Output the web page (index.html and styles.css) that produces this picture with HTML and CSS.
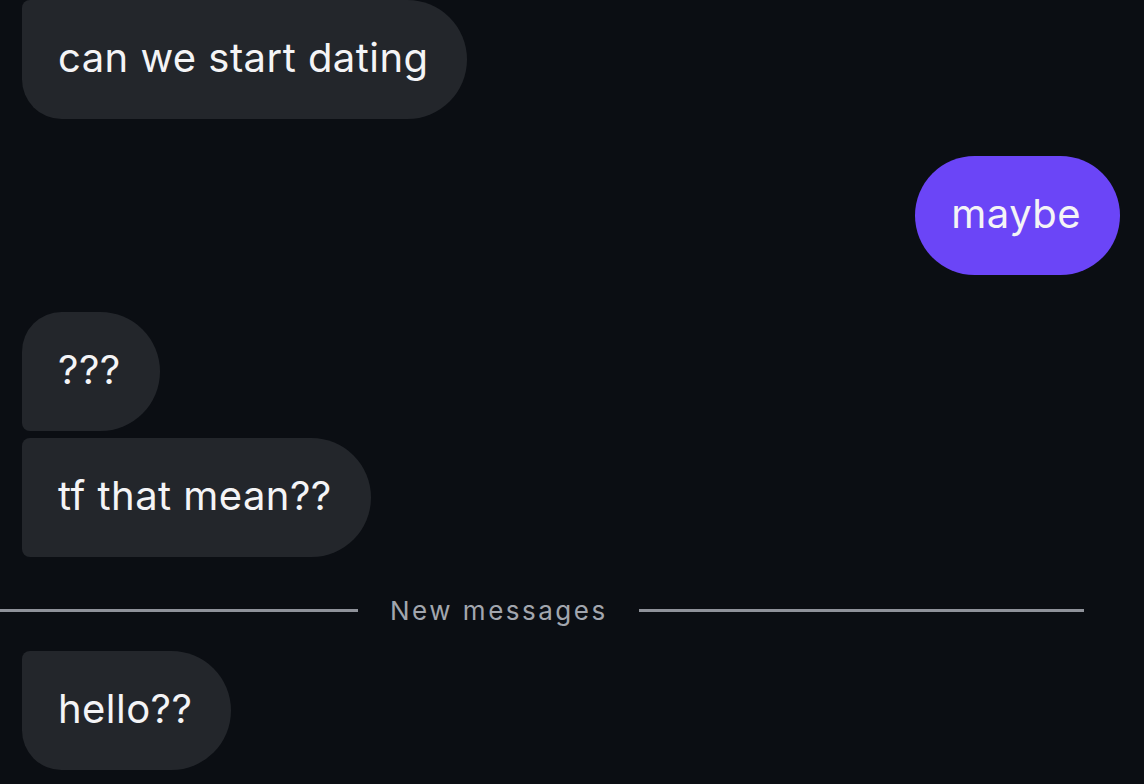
FILE: index.html
```html
<!DOCTYPE html>
<html>
<head>
<meta charset="utf-8">
<link rel="stylesheet" href="styles.css">
</head>
<body>
<div class="chat">
  <div class="row in"><div class="bubble in-last">can we start dating</div></div>
  <div class="row out gap-big"><div class="bubble out-solo">maybe</div></div>
  <div class="row in gap-big"><div class="bubble in-first">???</div></div>
  <div class="row in gap-small"><div class="bubble in-mid">tf that mean??</div></div>
  <div class="divider">
    <span class="line line-left"></span>
    <span class="divider-text">New messages</span>
    <span class="line line-right"></span>
  </div>
  <div class="row in"><div class="bubble in-last">hello??</div></div>
</div>
</body>
</html>
```

FILE: styles.css
```css
html, body {
  margin: 0;
  padding: 0;
  background: #0b0e13;
  height: 100%;
  overflow: hidden;
}
.chat {
  display: flex;
  flex-direction: column;
  padding: 0 24px 0 22px;
  font-family: Inter, "Noto Sans", sans-serif;
}
.row {
  display: flex;
}
.row.out {
  justify-content: flex-end;
}
.gap-big {
  margin-top: 37px;
}
.gap-small {
  margin-top: 7px;
}
.bubble {
  height: 119px;
  box-sizing: border-box;
  display: flex;
  align-items: center;
  padding: 0 39px 5px 36px;
  font-size: 40px;
  color: #f4f4f6;
  background: #23262b;
  border-radius: 60px;
  letter-spacing: 0.45px;
}
.bubble.out-solo {
  background: #6b45f7;
  padding: 0 39px 5px 36px;
}
.bubble.in-last {
  border-radius: 8px 60px 60px 40px;
}
.bubble.in-first {
  border-radius: 40px 60px 60px 8px;
}
.bubble.in-mid {
  border-radius: 8px 60px 60px 8px;
}
.divider {
  display: flex;
  align-items: center;
  margin: 39px -24px 27px -22px;
  padding-right: 60px;
  height: 28px;
}
.line {
  height: 3px;
  background: #8f929a;
}
.line-left {
  width: 358px;
}
.line-right {
  flex: 1;
}
.divider-text {
  padding: 0 31px 0 32px;
  font-size: 26px;
  color: #a2a6ae;
  letter-spacing: 2.5px;
}
```
